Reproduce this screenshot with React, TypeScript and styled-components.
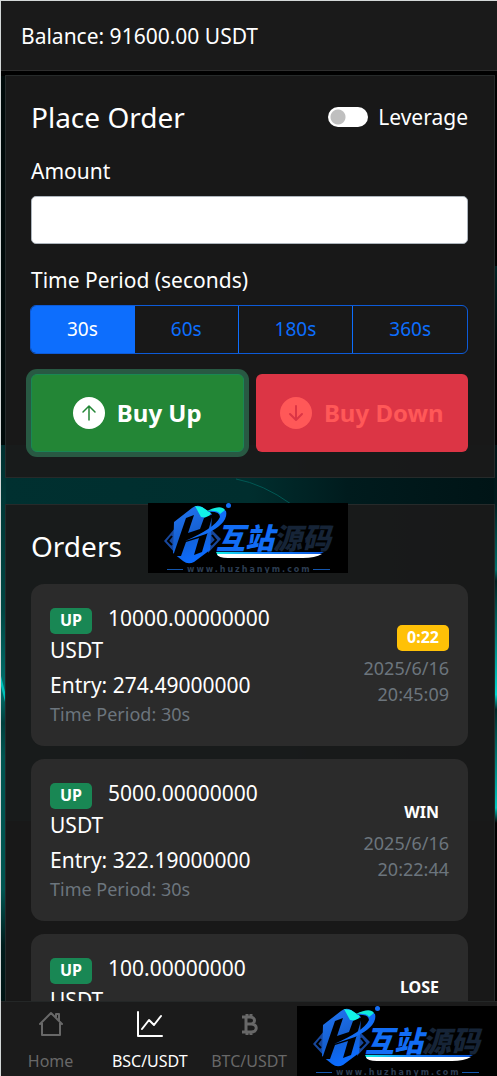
import React from "react";
import styled, { createGlobalStyle, css } from "styled-components";

const Global = createGlobalStyle`
  * { box-sizing: border-box; }
  body { margin: 0; background: #000; }
  button, input { font: inherit; }
`;

const Page = styled.div`
  height: 100vh;
  display: flex;
  flex-direction: column;
  position: relative;
  overflow: hidden;
  color: #fff;
  font-family: "Noto Sans", "Open Sans", sans-serif;
  font-size: 21px;
  line-height: 32px;
  border-left: 1px solid #d4d8d8;
  border-top: 1px solid #d4d8d8;
  background: #000;
`;

const Backdrop = styled.svg`
  position: absolute;
  inset: 0;
  width: 100%;
  height: 100%;
`;

const TopBar = styled.header`
  position: relative;
  flex: none;
  height: 70px;
  padding: 0 20px;
  display: flex;
  align-items: center;
  background: #1a1a1a;
  border-bottom: 1px solid #2e2e2e;
`;

const Content = styled.main`
  position: relative;
  flex: 1;
  min-height: 0;
  padding: 4px 2px 0 4px;
  display: flex;
  flex-direction: column;
  gap: 26px;
  overflow-y: auto;
  scrollbar-width: none;
`;

const Panel = styled.section`
  position: relative;
  flex: none;
  padding: 23px 26px 25px 25px;
  background: rgba(26, 26, 26, 0.92);
  border: 1px solid #262a2a;
`;

const PanelHead = styled.div`
  display: flex;
  align-items: center;
  justify-content: space-between;
  height: 36px;
  margin-bottom: 20px;
`;

const Title = styled.h2`
  margin: 0;
  font-size: 28px;
  line-height: 36px;
  font-weight: 400;
`;

const SwitchLabel = styled.label`
  display: flex;
  align-items: center;
  gap: 10px;
`;

const Switch = styled.input`
  appearance: none;
  margin: 0;
  width: 40px;
  height: 20px;
  border-radius: 10px;
  background: radial-gradient(circle at 10px 10px, #bfbfbf 7px, #fff 8px);
`;

const FieldLabel = styled.label`
  display: block;
  height: 32px;
  margin-bottom: 9px;
`;

const GroupLabel = styled.div`
  height: 32px;
  margin-bottom: 9px;
`;

const AmountInput = styled.input`
  display: block;
  width: 100%;
  height: 48px;
  margin-bottom: 20px;
  padding: 0 16px;
  border: 1px solid #adb5bd;
  border-radius: 5px;
  background: #fff;
`;

const PeriodGroup = styled.div`
  display: flex;
  height: 49px;
  margin: 0 0 20px -1px;
  border: 1px solid #0d5bd8;
  border-radius: 6px;
  overflow: hidden;
`;

const PeriodButton = styled.button<{ $active?: boolean }>`
  flex: 1 1 auto;
  padding: 0 20px 2px;
  border: 0;
  font-size: 19px;
  color: ${(p) => (p.$active ? "#fff" : "#0d6efd")};
  background: ${(p) => (p.$active ? "#0d6efd" : "transparent")};
  & + & { border-left: 1px solid #0d6efd; }
`;

const Trade = styled.div`
  display: grid;
  grid-template-columns: 1fr 1fr;
  gap: 12px;
`;

const TradeButton = styled.button<{ $up?: boolean }>`
  display: flex;
  align-items: center;
  justify-content: center;
  gap: 12px;
  height: 78px;
  padding: 0;
  border: 0;
  border-radius: 6px;
  font-size: 24px;
  font-weight: 700;
  white-space: nowrap;
  ${(p) =>
    p.$up
      ? css`color: #fff; background: #238636; border: 1px solid #198754; box-shadow: 0 0 0 5px #285943;`
      : css`color: #ff5858; background: #dc3545;`}
`;

const OrderList = styled.ul`
  list-style: none;
  margin: 0;
  padding: 0;
  display: flex;
  flex-direction: column;
  gap: 13px;
`;

const OrderCard = styled.li`
  display: flex;
  justify-content: space-between;
  align-items: flex-start;
  min-height: 162px;
  padding: 18px 19px 16px;
  border-radius: 13px;
  background: #2b2b2b;
`;

const OrderInfo = styled.div`
  width: 232px;
`;

const OrderSide = styled.div`
  width: 100px;
  padding-top: 17px;
  text-align: right;
`;

const Badge = styled.span<{ $tone?: string }>`
  display: inline-block;
  height: 26px;
  padding: 0 10px;
  border-radius: 5px;
  font-size: 16px;
  line-height: 25px;
  font-weight: 700;
  background: ${(p) => p.$tone || "transparent"};
`;

const Amount = styled.div`
  margin-bottom: 3px;
  ${Badge} { margin-right: 16px; }
`;

const Muted = styled.div`
  font-size: 18px;
  line-height: 26px;
  color: #6c757d;
  ${Badge} + & { margin-top: 4px; }
`;

const NavBar = styled.nav`
  position: relative;
  flex: none;
  height: 75px;
  display: grid;
  grid-template-columns: repeat(5, 1fr);
  background: #1b1b1b;
  border-top: 1px solid #242727;
`;

const NavLink = styled.a<{ $active?: boolean }>`
  display: flex;
  flex-direction: column;
  align-items: center;
  gap: 12px;
  padding-top: 9px;
  font-size: 16px;
  line-height: 24px;
  text-decoration: none;
  white-space: nowrap;
  color: ${(p) => (p.$active ? "#fff" : "#686868")};
`;

const Watermark = styled.div<{ $place: "orders" | "nav" }>`
  position: absolute;
  width: 200px;
  height: 70px;
  ${(p) => (p.$place === "orders" ? css`top: -2px; left: 142px;` : css`top: 4px; right: 0;`)}
  svg { display: block; }
`;

function Logo({ id }: { id: string }) {
  return (
    <svg width="200" height="70" viewBox="0 0 200 70" role="img" aria-label="互站源码">
      <defs>
        <linearGradient id={id + "a"} x1="0" y1="0" x2="0.3" y2="1">
          <stop offset="0" stopColor="#2277f5" />
          <stop offset="0.6" stopColor="#155fd0" />
          <stop offset="1" stopColor="#0b6cff" />
        </linearGradient>
        <linearGradient id={id + "b"} x1="0" y1="0" x2="1" y2="0">
          <stop offset="0" stopColor="#12f3e6" />
          <stop offset="0.4" stopColor="#1684ff" />
          <stop offset="1" stopColor="#0b56d8" />
        </linearGradient>
      </defs>
      <rect width="200" height="70" fill="#000" />
      <path d="M28 24 L16 38 L28 51 Z M60 23 L73 36 L60 50 Z" fill="#17479c" />
      <path d="M26 19 L44 5 Q49 1 54 4 L64 11 L62 47 L46 59 Q40 62 35 58 L25 50 Z" fill={`url(#${id}a)`} />
      <path d="M47 3 L54 4 L63 10 L60 15 L53 14 Z" fill="#12f3e6" />
      <path d="M38 15 L46 12 L40 30 L52 26 L56 15 L65 11 L54 49 L46 52 L51 35 L38 39 L33 53 L25 53 Z" fill="#000" />
      <path d="M59 9 Q73 3 78 8 Q81 20 58 31 L37 38 Q67 25 72 14 Q72 8 59 9Z" fill="#126df5" />
      <path d="M59 8 Q73 1 77 7 L72 11 Q70 7 59 8Z" fill="#10eadc" />
      <circle cx="80.5" cy="2.5" r="2.5" fill="#126df5" />
      <path d="M24 33 L20 38 L24 42 M64 32 L68 37 L63 42" fill="none" stroke="#000" strokeWidth="2" />
      <g fontFamily="Noto Sans CJK SC, sans-serif" fontWeight="900" fontSize="29" fontStyle="italic">
        <text x="68" y="46" fill="#126df5">互站</text>
        <text x="125" y="46" fill="#162437">源码</text>
      </g>
      <path d="M68 49 H176 L168 53 H70Z" fill={`url(#${id}b)`} />
      <path d="M69 51 H174 Q167 55 155 55 H80 Q70 55 69 51Z" fill="#fff" />
      <path d="M19 66.5 H35 M165 66.5 H182" stroke="#1456ad" />
      <text x="39" y="69" fill="#2c3d52" fontFamily="DejaVu Sans, sans-serif" fontWeight="700" fontSize="8" letterSpacing="2">www.huzhanym.com</text>
    </svg>
  );
}

function ArrowCircle({ up }: { up?: boolean }) {
  return (
    <svg width="32" height="32" viewBox="0 0 32 32" aria-hidden="true">
      <circle cx="16" cy="16" r="16" fill="currentColor" />
      <path
        d={up ? "M16 23V9 M10 15l6-6 6 6" : "M16 9v14 M10 17l6 6 6-6"}
        fill="none"
        stroke={up ? "#238636" : "#dc3545"}
        strokeWidth={up ? 1.5 : 2}
        strokeLinecap="round"
        strokeLinejoin="round"
      />
    </svg>
  );
}

type Order = { amount: string; result: string; entry?: string; tone?: string; time?: string };

const orders: Order[] = [
  { amount: "10000.00000000", entry: "274.49000000", result: "0:22", tone: "#ffc107", time: "20:45:09" },
  { amount: "5000.00000000", entry: "322.19000000", result: "WIN", time: "20:22:44" },
  { amount: "100.00000000", result: "LOSE" },
];

export default function App() {
  return (
    <Page>
      <Global />
      <Backdrop viewBox="0 0 496 1075" preserveAspectRatio="none" aria-hidden="true">
        <defs>
          <linearGradient id="glow" x1="0" y1="0" x2="1" y2="0">
            <stop offset="0" stopColor="#003030" />
            <stop offset="0.5" stopColor="#002e2e" />
            <stop offset="0.7" stopColor="#001b1d" />
            <stop offset="1" stopColor="#001416" />
          </linearGradient>
          <linearGradient id="left" x1="0" y1="0" x2="0" y2="1">
            <stop offset="0" stopColor="#003030" />
            <stop offset="0.3" stopColor="#004643" />
            <stop offset="0.44" stopColor="#00706c" />
            <stop offset="0.5" stopColor="#003f3d" />
            <stop offset="0.56" stopColor="#005450" />
            <stop offset="0.8" stopColor="#005450" />
            <stop offset="0.9" stopColor="#001c1c" />
            <stop offset="1" stopColor="#001414" />
          </linearGradient>
          <linearGradient id="top" x1="0" y1="0" x2="0" y2="1">
            <stop offset="0" stopColor="#002224" />
            <stop offset="1" stopColor="#000" />
          </linearGradient>
          <linearGradient id="right" x1="0" y1="0" x2="0" y2="1">
            <stop offset="0" stopColor="#001416" />
            <stop offset="0.15" stopColor="#001a1c" />
            <stop offset="0.33" stopColor="#00706c" />
            <stop offset="0.36" stopColor="#002020" />
            <stop offset="0.66" stopColor="#00d8d0" />
            <stop offset="0.7" stopColor="#002828" />
            <stop offset="0.96" stopColor="#00c8c0" />
            <stop offset="1" stopColor="#000" />
          </linearGradient>
        </defs>
        <path d="M0 75H4V444H0Z" fill="#000a0a" />
        <path d="M493 265H496V365H493Z" fill="url(#top)" />
        <path d="M0 444H496V820H0Z" fill="url(#glow)" />
        <path d="M0 444H5V1000H0Z" fill="url(#left)" />
        <path d="M0 675L5 695V705L0 685Z" fill="#00c0b8" />
        <path d="M493 444H496V822H493Z" fill="url(#right)" />
        <path d="M235 478Q262 483 290 503" fill="none" stroke="#005854" strokeWidth="1" />
      </Backdrop>
      <TopBar>Balance: 91600.00 USDT</TopBar>
      <Content>
        <Panel>
          <PanelHead>
            <Title>Place Order</Title>
            <SwitchLabel>
              <Switch type="checkbox" role="switch" />
              Leverage
            </SwitchLabel>
          </PanelHead>
          <FieldLabel htmlFor="amount">Amount</FieldLabel>
          <AmountInput id="amount" type="text" inputMode="decimal" />
          <GroupLabel id="period">Time Period (seconds)</GroupLabel>
          <PeriodGroup role="group" aria-labelledby="period">
            {["30s", "60s", "180s", "360s"].map((p, i) => (
              <PeriodButton key={p} type="button" $active={i === 0} aria-pressed={i === 0}>{p}</PeriodButton>
            ))}
          </PeriodGroup>
          <Trade>
            <TradeButton type="button" $up><ArrowCircle up />Buy Up</TradeButton>
            <TradeButton type="button"><ArrowCircle />Buy Down</TradeButton>
          </Trade>
        </Panel>
        <Panel>
          <PanelHead><Title>Orders</Title></PanelHead>
          <OrderList>
            {orders.map((o) => (
              <OrderCard key={o.amount}>
                <OrderInfo>
                  <Amount><Badge $tone="#198754">UP</Badge>{o.amount} USDT</Amount>
                  {o.entry && <div>Entry: {o.entry}</div>}
                  {o.entry && <Muted>Time Period: 30s</Muted>}
                </OrderInfo>
                <OrderSide>
                  <Badge $tone={o.tone}>{o.result}</Badge>
                  {o.time && <Muted>2025/6/16 {o.time}</Muted>}
                </OrderSide>
              </OrderCard>
            ))}
          </OrderList>
          <Watermark $place="orders"><Logo id="lo" /></Watermark>
        </Panel>
      </Content>
      <NavBar>
        <NavLink href="#home">
          <svg width="26" height="26" viewBox="0 0 26 26" fill="none" stroke="currentColor" strokeWidth="2" strokeLinejoin="round" strokeLinecap="round" aria-hidden="true">
            <path d="M2 13L13 2l11 11M4 12v12h18V12M18 6V3h3v7" />
          </svg>
          Home
        </NavLink>
        <NavLink href="#bsc" $active>
          <svg width="26" height="26" viewBox="0 0 26 26" fill="none" stroke="currentColor" strokeWidth="2" strokeLinejoin="round" strokeLinecap="round" aria-hidden="true">
            <path d="M1 1v24h24M5 18l7-9 5 5 7-9" />
          </svg>
          BSC/USDT
        </NavLink>
        <NavLink href="#btc">
          <svg width="26" height="26" viewBox="0 0 26 26" fill="none" stroke="currentColor" strokeWidth="3" aria-hidden="true">
            <path d="M6 6h8c6 0 6 7 0 7H9h6c7 0 7 8 0 8H6M10 6v15M11 3v4M15 3v4M11 20v4M15 20v4" />
          </svg>
          BTC/USDT
        </NavLink>
        <Watermark $place="nav"><Logo id="ln" /></Watermark>
      </NavBar>
    </Page>
  );
}
